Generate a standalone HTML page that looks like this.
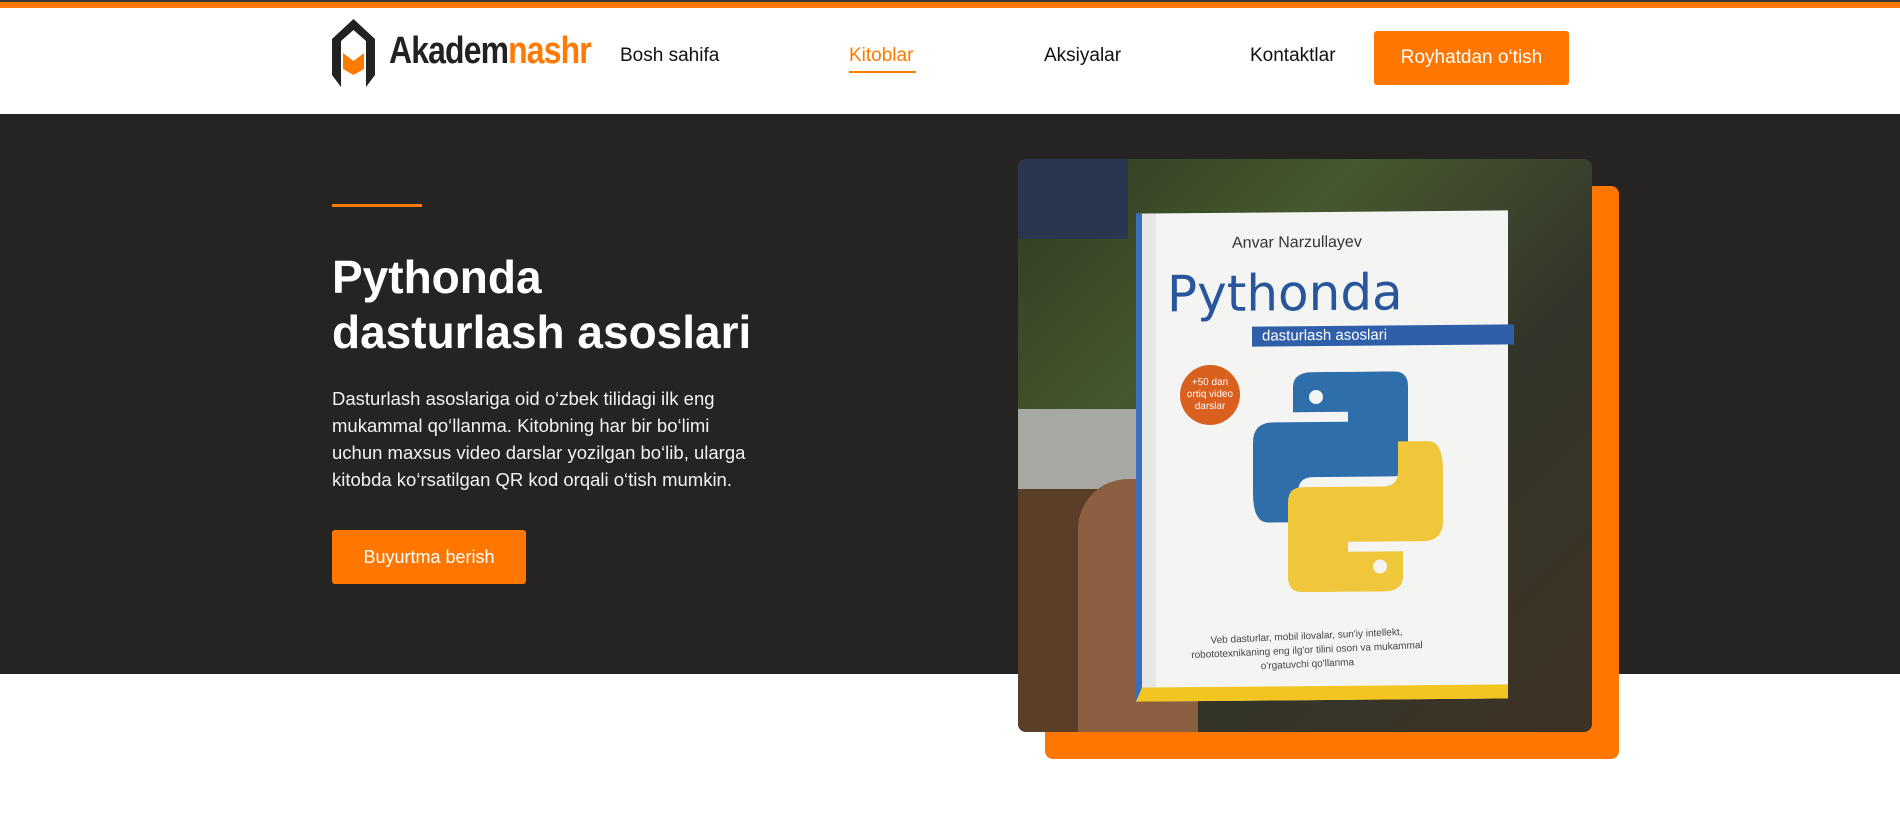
<!DOCTYPE html>
<html><head><meta charset="utf-8"><style>
*{margin:0;padding:0;box-sizing:border-box}
body{width:1900px;height:824px;overflow:hidden;background:#fff;font-family:"Liberation Sans",sans-serif;position:relative}
.top{position:absolute;left:0;top:0;width:1900px;height:2px;background:#3a3a3a}
.top2{position:absolute;left:0;top:2px;width:1900px;height:6px;background:#ff7a00}
.nav{position:absolute;top:45px;font-size:19px;color:#111}
.hero{position:absolute;left:0;top:114px;width:1900px;height:560px;background:#252422}
.btn{position:absolute;background:#ff7700;color:#fff;border-radius:3px;font-size:18px;display:flex;align-items:center;justify-content:center}
</style></head><body>
<div class="top"></div><div class="top2"></div>
<svg style="position:absolute;left:332px;top:19px" width="43" height="68" viewBox="0 0 43 68">
<path d="M21.5 0 L43 20 L43 56 L34 68 L34 22 L21.5 11 L9 22 L9 68 L0 56 L0 20 Z" fill="#222"/>
<path d="M11 34 L21.5 42 L32 34 L32 50 L21.5 56 L11 50 Z" fill="#ff7a00"/>
</svg>
<div style="position:absolute;left:389px;top:30px;font-size:38px;font-weight:bold;letter-spacing:-1px;transform:scaleX(0.84);transform-origin:left;white-space:nowrap"><span style="color:#222">Akadem</span><span style="color:#ff7a00">nashr</span></div>
<div class="nav" style="left:620px">Bosh sahifa</div>
<div class="nav" style="left:849px;color:#ff7a00">Kitoblar</div>
<div style="position:absolute;left:849px;top:71px;width:67px;height:2px;background:#ff7a00"></div>
<div class="nav" style="left:1044px">Aksiyalar</div>
<div class="nav" style="left:1250px">Kontaktlar</div>
<div class="btn" style="left:1374px;top:31px;width:195px;height:54px;font-size:19px">Royhatdan o‘tish</div>
<div class="hero"></div>
<div style="position:absolute;left:332px;top:204px;width:90px;height:3px;background:#ff7a00"></div>
<div style="position:absolute;left:332px;top:250px;color:#fff;font-size:46px;font-weight:bold;line-height:55px">Pythonda<br>dasturlash asoslari</div>
<div style="position:absolute;left:332px;top:385px;width:428px;color:#f2f2f2;font-size:18.5px;line-height:27px">Dasturlash asoslariga oid o‘zbek tilidagi ilk eng mukammal qo‘llanma. Kitobning har bir bo‘limi uchun maxsus video darslar yozilgan bo‘lib, ularga kitobda ko‘rsatilgan QR kod orqali o‘tish mumkin.</div>
<div class="btn" style="left:332px;top:530px;width:194px;height:54px">Buyurtma berish</div>
<div style="position:absolute;left:1045px;top:186px;width:574px;height:573px;background:#ff7700;border-radius:8px"></div>
<div style="position:absolute;left:1018px;top:159px;width:574px;height:573px;border-radius:8px;overflow:hidden;background:linear-gradient(135deg,#2f3a22 0%,#46582e 30%,#33352a 60%,#3e3224 100%)">
<div style="position:absolute;left:0;top:0;width:110px;height:80px;background:#2a3650"></div>
<div style="position:absolute;left:0;top:250px;width:120px;height:80px;background:#a8a8a2"></div>
<div style="position:absolute;left:0;top:330px;width:150px;height:243px;background:#5b3e28"></div>
<div style="position:absolute;left:60px;top:320px;width:120px;height:253px;background:#8c5f40;border-radius:50px 20px 0 0"></div>
<div style="position:absolute;left:118px;top:53px;width:372px;height:488px;background:#f4f4f2;transform:skewY(-0.5deg);border-left:6px solid #3a6fc0;border-bottom:14px solid #f3c520">
<div style="position:absolute;left:0;top:0;width:14px;height:100%;background:#e6e6e4"></div>
<div style="position:absolute;left:90px;top:22px;font-size:16px;color:#333">Anvar Narzullayev</div>
<div style="position:absolute;left:25px;top:52px;font-size:50px;color:#28569c;font-family:'DejaVu Sans',sans-serif">Pythonda</div>
<div style="position:absolute;left:110px;top:114px;width:262px;height:20px;background:#2f5fa8;color:#fff;font-size:15px;padding-left:10px;line-height:20px">dasturlash asoslari</div>
<div style="position:absolute;left:38px;top:152px;width:60px;height:60px;border-radius:50%;background:#d9601f;color:#fff;font-size:10px;text-align:center;padding-top:12px;line-height:12px">+50 dan<br>ortiq video<br>darslar</div>
<svg style="position:absolute;left:100px;top:160px" width="212" height="220" viewBox="0 0 190 220">
<path d="M60 0 H140 Q155 0 155 15 V90 Q155 105 140 105 H60 Q45 105 45 120 V150 H15 Q0 150 0 120 V70 Q0 50 20 50 H95 V40 H40 V15 Q40 0 60 0Z" fill="#2e6eab"/>
<circle cx="63" cy="25" r="7" fill="#f4f4f2"/>
<path d="M130 220 H50 Q35 220 35 205 V130 Q35 115 50 115 H130 Q145 115 145 100 V70 H175 Q190 70 190 100 V150 Q190 170 170 170 H95 V180 H150 V205 Q150 220 130 220Z" fill="#f0c63a"/>
<circle cx="127" cy="195" r="7" fill="#f4f4f2"/>
</svg>
<div style="position:absolute;left:40px;top:418px;width:250px;font-size:10px;color:#444;text-align:center;line-height:14px;transform:rotate(-2deg)">Veb dasturlar, mobil ilovalar, sun'iy intellekt, robototexnikaning eng ilg'or tilini oson va mukammal o'rgatuvchi qo'llanma</div>
</div>
</div>
</body></html>
